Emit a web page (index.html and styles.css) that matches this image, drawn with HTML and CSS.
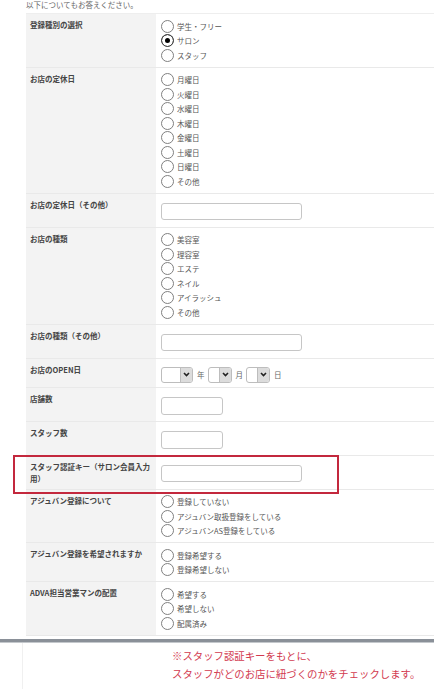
FILE: index.html
```html
<!DOCTYPE html>
<html lang="ja">
<head>
    <meta charset="UTF-8">
    <meta name="viewport" content="width=device-width, initial-scale=1.0">
    <title>登録フォーム</title>
    <link rel="stylesheet" href="styles.css">
</head>
<body>
    <div class="page">
        <p class="intro">以下についてもお答えください。</p>

        <div class="form-table">
            <div class="row">
                <div class="label">登録種別の選択</div>
                <div class="field">
                    <label class="radio"><input type="radio" name="kind">学生・フリー</label>
                    <label class="radio"><input type="radio" name="kind" checked>サロン</label>
                    <label class="radio"><input type="radio" name="kind">スタッフ</label>
                </div>
            </div>

            <div class="row">
                <div class="label">お店の定休日</div>
                <div class="field">
                    <label class="radio"><input type="radio" name="holiday">月曜日</label>
                    <label class="radio"><input type="radio" name="holiday">火曜日</label>
                    <label class="radio"><input type="radio" name="holiday">水曜日</label>
                    <label class="radio"><input type="radio" name="holiday">木曜日</label>
                    <label class="radio"><input type="radio" name="holiday">金曜日</label>
                    <label class="radio"><input type="radio" name="holiday">土曜日</label>
                    <label class="radio"><input type="radio" name="holiday">日曜日</label>
                    <label class="radio"><input type="radio" name="holiday">その他</label>
                </div>
            </div>

            <div class="row">
                <div class="label">お店の定休日（その他）</div>
                <div class="field">
                    <input type="text" class="text">
                </div>
            </div>

            <div class="row">
                <div class="label">お店の種類</div>
                <div class="field">
                    <label class="radio"><input type="radio" name="shop">美容室</label>
                    <label class="radio"><input type="radio" name="shop">理容室</label>
                    <label class="radio"><input type="radio" name="shop">エステ</label>
                    <label class="radio"><input type="radio" name="shop">ネイル</label>
                    <label class="radio"><input type="radio" name="shop">アイラッシュ</label>
                    <label class="radio"><input type="radio" name="shop">その他</label>
                </div>
            </div>

            <div class="row">
                <div class="label">お店の種類（その他）</div>
                <div class="field">
                    <input type="text" class="text">
                </div>
            </div>

            <div class="row">
                <div class="label">お店のOPEN日</div>
                <div class="field date">
                    <span class="select wide"><span class="value"></span><span class="arrow"><svg width="7" height="5" viewBox="0 0 7 5"><path d="M1 1l2.5 2.5L6 1" fill="none" stroke="#222" stroke-width="1.6"/></svg></span></span>
                    <span class="unit">年</span>
                    <span class="select"><span class="value"></span><span class="arrow"><svg width="7" height="5" viewBox="0 0 7 5"><path d="M1 1l2.5 2.5L6 1" fill="none" stroke="#222" stroke-width="1.6"/></svg></span></span>
                    <span class="unit">月</span>
                    <span class="select"><span class="value"></span><span class="arrow"><svg width="7" height="5" viewBox="0 0 7 5"><path d="M1 1l2.5 2.5L6 1" fill="none" stroke="#222" stroke-width="1.6"/></svg></span></span>
                    <span class="unit">日</span>
                </div>
            </div>

            <div class="row">
                <div class="label">店舗数</div>
                <div class="field">
                    <input type="text" class="text short">
                </div>
            </div>

            <div class="row">
                <div class="label">スタッフ数</div>
                <div class="field">
                    <input type="text" class="text short">
                </div>
            </div>

            <div class="row marked">
                <div class="label">スタッフ認証キー（サロン会員入力用）</div>
                <div class="field">
                    <input type="text" class="text">
                </div>
                <div class="highlight"></div>
            </div>

            <div class="row">
                <div class="label">アジュバン登録について</div>
                <div class="field">
                    <label class="radio"><input type="radio" name="adjuvant">登録していない</label>
                    <label class="radio"><input type="radio" name="adjuvant">アジュバン取扱登録をしている</label>
                    <label class="radio"><input type="radio" name="adjuvant">アジュバンAS登録をしている</label>
                </div>
            </div>

            <div class="row">
                <div class="label">アジュバン登録を希望されますか</div>
                <div class="field">
                    <label class="radio"><input type="radio" name="hope">登録希望する</label>
                    <label class="radio"><input type="radio" name="hope">登録希望しない</label>
                </div>
            </div>

            <div class="row">
                <div class="label">ADVA担当営業マンの配置</div>
                <div class="field">
                    <label class="radio"><input type="radio" name="sales">希望する</label>
                    <label class="radio"><input type="radio" name="sales">希望しない</label>
                    <label class="radio"><input type="radio" name="sales">配属済み</label>
                </div>
            </div>
        </div>
    </div>

    <div class="divider"></div>

    <div class="note">
        <p>※スタッフ認証キーをもとに、</p>
        <p>スタッフがどのお店に紐づくのかをチェックします。</p>
    </div>
</body>
</html>
```

FILE: styles.css
```css
body {
    margin: 0;
    background: #fff;
    font-family: "Noto Sans CJK JP", "Noto Sans", sans-serif;
    color: #444;
    overflow: hidden;
}
.page {
    padding-left: 26px;
}
.intro {
    margin: 0;
    height: 13px;
    font-size: 7.5px;
    line-height: 9px;
    color: #666;
}
.form-table {
    border-top: 1px solid #eee;
}
.row {
    display: grid;
    grid-template-columns: 130px 1fr;
    border-bottom: 1px solid #e9e9e9;
}
.label {
    background: #f3f3f3;
    padding: 5px 4px 4px 4px;
    font-size: 7.5px;
    line-height: 12px;
    font-weight: bold;
    color: #444;
}
.field {
    padding: 5px 5px 4px 5px;
    font-size: 7.5px;
    color: #555;
}
.radio {
    display: flex;
    align-items: center;
    height: 14.5px;
}
.radio input {
    appearance: none;
    -webkit-appearance: none;
    width: 13px;
    height: 13px;
    margin: 0 3px 0 0;
    border: 1px solid #808080;
    border-radius: 50%;
    background: #fff;
}
.radio input:checked {
    border-color: #444;
    background: #000;
    box-shadow: inset 0 0 0 3px #fff;
}
.text {
    display: block;
    box-sizing: border-box;
    width: 141px;
    height: 17px;
    margin: 4px 0 3px 0;
    border: 1px solid #c6c6c6;
    border-radius: 3px;
    background: #fff;
}
.text.short {
    width: 62px;
    height: 18px;
    margin-bottom: 2px;
}
.date {
    display: flex;
    align-items: center;
    padding-top: 8px;
}
.select {
    display: inline-flex;
    box-sizing: border-box;
    width: 24px;
    height: 16px;
    border: 1px solid #bdbdbd;
    border-radius: 3px;
    overflow: hidden;
    background: #fff;
}
.select.wide {
    width: 32px;
}
.select .value {
    flex: 1;
}
.select .arrow {
    width: 11px;
    display: flex;
    align-items: center;
    justify-content: center;
    background: #dcdcdc;
    border-left: 1px solid #bdbdbd;
}
.unit {
    margin: 0 3px 0 4px;
    font-size: 7.5px;
    color: #666;
}
.marked {
    position: relative;
}
.highlight {
    position: absolute;
    left: -13px;
    top: -1px;
    width: 326px;
    height: 39px;
    box-sizing: border-box;
    border: 2px solid #c3283d;
}
.divider {
    margin-top: 3px;
    height: 3px;
    background: #8a9098;
    border-bottom: 1px solid #c4c8cc;
}
.note {
    margin-left: 22px;
    border-left: 1px solid #f0f0f0;
    padding: 4px 0 30px 149px;
    color: #d23a50;
    font-size: 10.4px;
    line-height: 18px;
}
.note p {
    margin: 0;
}
```
